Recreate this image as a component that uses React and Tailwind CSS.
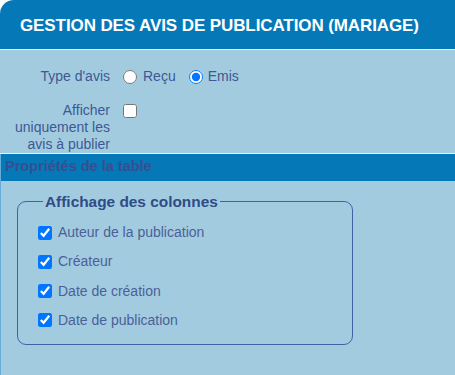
import React from "react";

export default function App() {
  const cols = [
    "Auteur de la publication",
    "Créateur",
    "Date de création",
    "Date de publication",
  ];
  return (
    <div className="w-[455px] h-[375px] overflow-hidden bg-white font-['Liberation_Sans',Arial,sans-serif]">
      <div className="h-[49px] bg-[#0579b8] rounded-tl-[14px] flex items-center pl-[20px] pt-[3px] text-white font-bold text-[17px] tracking-[-0.1px]">
        GESTION DES AVIS DE PUBLICATION (MARIAGE)
      </div>
      <div className="h-px bg-[#e4eff6]" />
      <div className="bg-[#a3cbe0] h-[326px] flex flex-col">
        <div className="pt-[18px] flex flex-col gap-[16px] text-[14px] text-[#3d5991] leading-[17px]">
          <div className="flex items-center">
            <div className="w-[110px] text-right">Type d'avis</div>
            <label className="flex items-center ml-[8px]">
              <input type="radio" name="t" className="m-0 ml-[5px] w-[14px] h-[14px]" />
              <span className="ml-[6px]">Reçu</span>
            </label>
            <label className="flex items-center ml-[8px]">
              <input type="radio" name="t" defaultChecked className="m-0 ml-[5px] w-[14px] h-[14px]" />
              <span className="ml-[5px]">Emis</span>
            </label>
          </div>
          <div className="flex items-start pt-px">
            <div className="w-[110px] pl-[8px] text-right">
              Afficher uniquement les avis à publier
            </div>
            <input type="checkbox" className="m-0 ml-[13px] mt-[2px] w-[14px] h-[14px]" />
          </div>
        </div>
        <div className="h-px bg-[#e4eff6]" />
        <div className="flex-1 border-l border-[#64acd9] flex flex-col">
          <div className="h-[27px] bg-[#0579b8] flex items-center pl-[4px] pb-[2px] text-[14.5px] font-bold text-[#354f90]">
            Propriétés de la table
          </div>
          <fieldset className="ml-[16px] mt-[12px] w-[336px] h-[152px] border border-[#3f64a3] rounded-[9px] pl-[20px] pr-0 pb-0 pt-0 m-0">
            <legend className="ml-[5px] px-[2px] text-[15.4px] font-bold text-[#2f4c85] leading-[17px]">
              Affichage des colonnes
            </legend>
            <div className="flex flex-col gap-[12.3px] mt-[14px]">
              {cols.map((c) => (
                <label key={c} className="flex items-center text-[14px] text-[#4a6198] leading-[17px]">
                  <input type="checkbox" defaultChecked className="m-0 w-[14px] h-[14px]" />
                  <span className="ml-[6px]">{c}</span>
                </label>
              ))}
            </div>
          </fieldset>
        </div>
      </div>
    </div>
  );
}
